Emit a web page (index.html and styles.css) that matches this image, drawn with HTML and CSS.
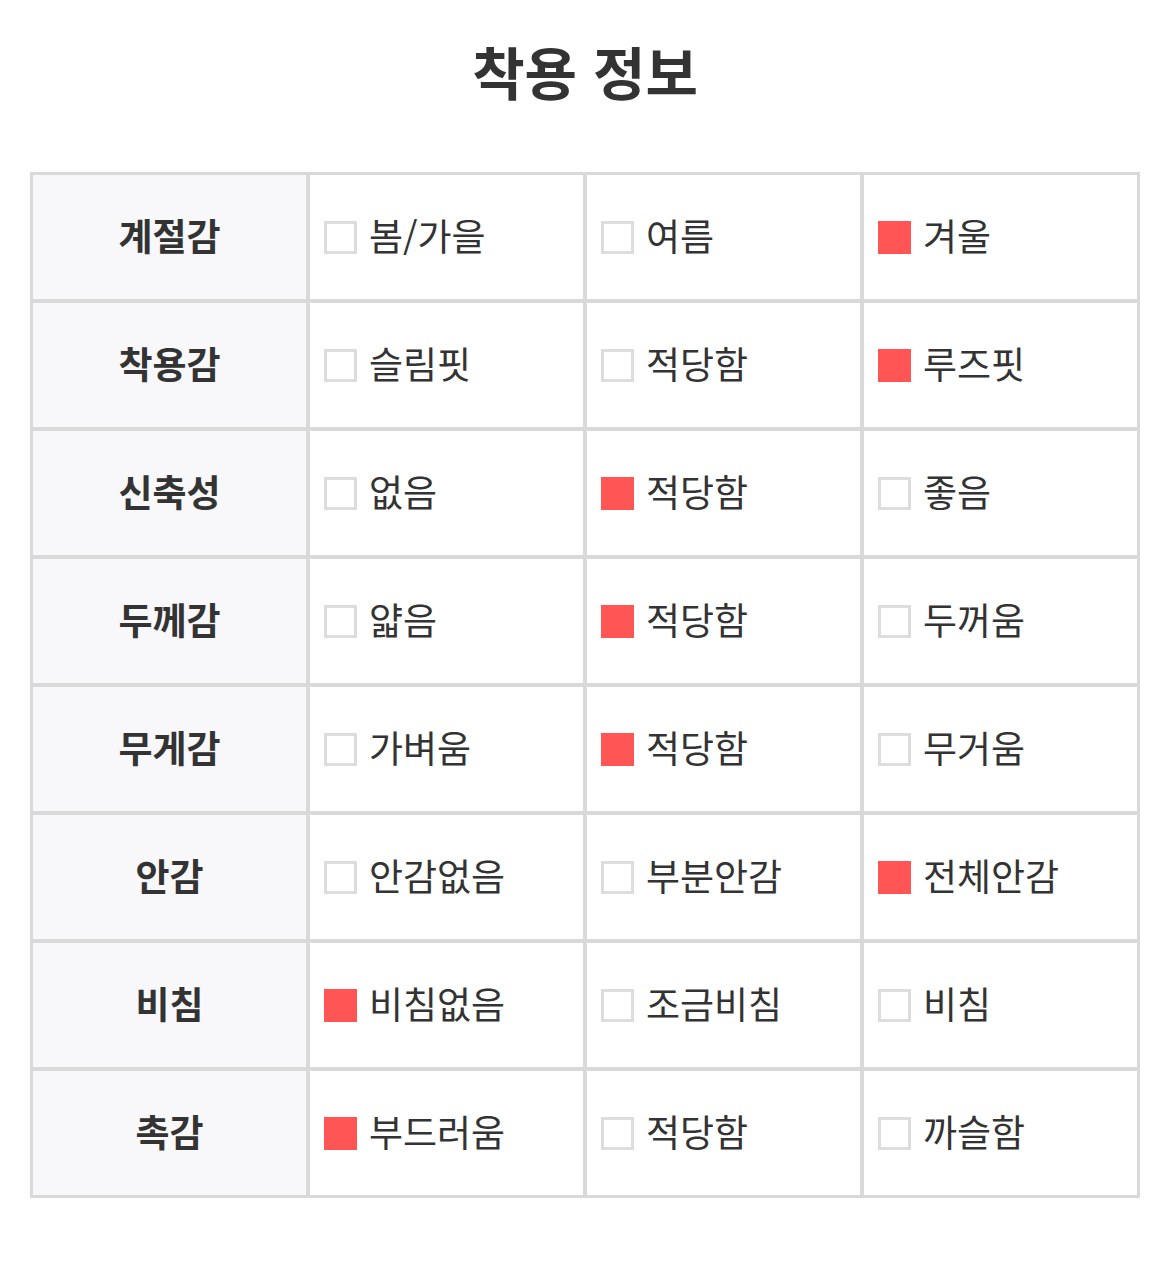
FILE: index.html
```html
<!DOCTYPE html>
<html lang="ko">
<head>
<meta charset="utf-8">
<title>착용 정보</title>
<link rel="stylesheet" href="styles.css">
</head>
<body>
<div class="page">
  <h1 class="title">착용 정보</h1>
  <table class="fit-table">
    <tbody>
      <tr>
        <th>계절감</th>
        <td><span class="opt"><span class="box"></span>봄/가을</span></td>
        <td><span class="opt"><span class="box"></span>여름</span></td>
        <td><span class="opt"><span class="box on"></span>겨울</span></td>
      </tr>
      <tr>
        <th>착용감</th>
        <td><span class="opt"><span class="box"></span>슬림핏</span></td>
        <td><span class="opt"><span class="box"></span>적당함</span></td>
        <td><span class="opt"><span class="box on"></span>루즈핏</span></td>
      </tr>
      <tr>
        <th>신축성</th>
        <td><span class="opt"><span class="box"></span>없음</span></td>
        <td><span class="opt"><span class="box on"></span>적당함</span></td>
        <td><span class="opt"><span class="box"></span>좋음</span></td>
      </tr>
      <tr>
        <th>두께감</th>
        <td><span class="opt"><span class="box"></span>얇음</span></td>
        <td><span class="opt"><span class="box on"></span>적당함</span></td>
        <td><span class="opt"><span class="box"></span>두꺼움</span></td>
      </tr>
      <tr>
        <th>무게감</th>
        <td><span class="opt"><span class="box"></span>가벼움</span></td>
        <td><span class="opt"><span class="box on"></span>적당함</span></td>
        <td><span class="opt"><span class="box"></span>무거움</span></td>
      </tr>
      <tr>
        <th>안감</th>
        <td><span class="opt"><span class="box"></span>안감없음</span></td>
        <td><span class="opt"><span class="box"></span>부분안감</span></td>
        <td><span class="opt"><span class="box on"></span>전체안감</span></td>
      </tr>
      <tr>
        <th>비침</th>
        <td><span class="opt"><span class="box on"></span>비침없음</span></td>
        <td><span class="opt"><span class="box"></span>조금비침</span></td>
        <td><span class="opt"><span class="box"></span>비침</span></td>
      </tr>
      <tr>
        <th>촉감</th>
        <td><span class="opt"><span class="box on"></span>부드러움</span></td>
        <td><span class="opt"><span class="box"></span>적당함</span></td>
        <td><span class="opt"><span class="box"></span>까슬함</span></td>
      </tr>
    </tbody>
  </table>
</div>
</body>
</html>
```

FILE: styles.css
```css
html, body {
  margin: 0;
  padding: 0;
  background: #ffffff;
}

body {
  font-family: "Noto Sans CJK KR", "Noto Sans", sans-serif;
  color: #333333;
}

.page {
  padding: 30px 30px 0;
}

.title {
  margin: 0 0 62px;
  font-size: 57px;
  line-height: 80px;
  font-weight: 700;
  text-align: center;
  color: #333333;
}

.fit-table {
  width: 1110px;
  border-collapse: separate;
  border-spacing: 0;
  border: 1px solid #d9d9d9;
  table-layout: fixed;
}

.fit-table th,
.fit-table td {
  border: 2px solid #d9d9d9;
  padding: 0;
  box-sizing: border-box;
  height: 128px;
  vertical-align: middle;
}

.fit-table th {
  background: #f8f8fa;
  font-size: 37px;
  line-height: 40px;
  font-weight: 700;
  text-align: center;
  color: #333333;
  padding-bottom: 4px;
}

.fit-table td {
  padding-left: 14px;
  padding-bottom: 4px;
  text-align: left;
}

.opt {
  display: flex;
  align-items: center;
  gap: 12px;
  font-size: 37px;
  line-height: 40px;
  color: #333333;
}

.box {
  flex: none;
  width: 33px;
  height: 33px;
  box-sizing: border-box;
  border: 3px solid #dddddd;
  background: #ffffff;
  margin-top: 5px;
}

.box.on {
  border-color: #ff5555;
  background: #ff5555;
}
```
